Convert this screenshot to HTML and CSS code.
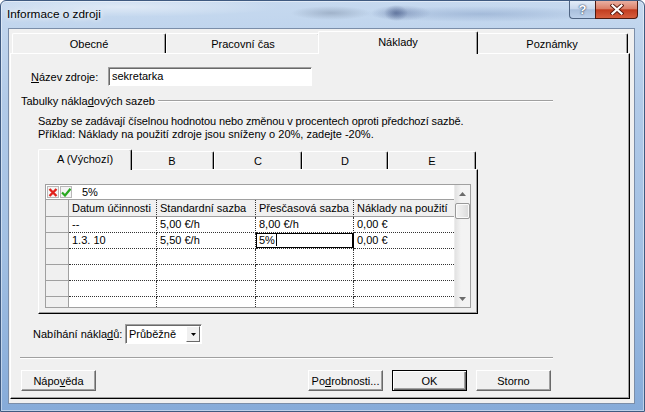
FILE: index.html
```html
<!DOCTYPE html>
<html lang="cs">
<head>
<meta charset="utf-8">
<title>Informace o zdroji</title>
<link rel="stylesheet" href="styles.css">
</head>
<body>
<div class="window">
  <div class="titlebar">
    <span class="title">Informace o zdroji</span>
    <div class="caption">
      <div class="cap-btn cap-help">?</div>
      <div class="cap-btn cap-close">
        <svg width="14" height="11" viewBox="0 0 14 11"><path d="M2.5 1.5 L11.5 9.5 M11.5 1.5 L2.5 9.5" stroke="#5a1a10" stroke-width="4" stroke-linecap="square"/><path d="M2.5 1.5 L11.5 9.5 M11.5 1.5 L2.5 9.5" stroke="#fff" stroke-width="2.2" stroke-linecap="square"/></svg>
      </div>
    </div>
  </div>
  <div class="client">
    <div class="tabstrip main">
      <div class="tab" style="width:154px">Obecné</div>
      <div class="tab" style="width:154px">Pracovní čas</div>
      <div class="tab active" style="width:160px">Náklady</div>
      <div class="tab" style="width:152px">Poznámky</div>
    </div>
    <div class="panel">
      <div class="name-row">
        <span class="lbl-name"><u>N</u>ázev zdroje:</span>
        <div class="textbox">sekretarka</div>
      </div>
      <div class="group-head">
        <span>Tabulky nákla<u>d</u>ových sazeb</span>
        <div class="etch"></div>
      </div>
      <p class="desc"><span class="tight">Sazby se zadávají číselnou hodnotou nebo změnou v procentech oproti předchozí sazbě.</span><br>Příklad: Náklady na použití zdroje jsou sníženy o 20%, zadejte -20%.</p>
      <div class="rates">
        <div class="tabstrip inner">
          <div class="tab active" style="width:94px">A (Výchozí)</div>
          <div class="tab" style="width:84px">B</div>
          <div class="tab" style="width:88px">C</div>
          <div class="tab" style="width:86px">D</div>
          <div class="tab" style="width:88px">E</div>
        </div>
        <div class="inner-panel">
          <div class="grid">
            <div class="grid-main">
              <div class="editbar">
                <span class="eb-icon"><svg width="10" height="9" viewBox="0 0 10 9"><path d="M1.5 1 L8.5 8 M8.5 1 L1.5 8" stroke="#e0201a" stroke-width="2.4"/></svg></span>
                <span class="eb-icon"><svg width="10" height="9" viewBox="0 0 10 9"><path d="M1 4.5 L4 7.5 L9.5 0.8" fill="none" stroke="#28a820" stroke-width="2.2"/></svg></span>
                <span class="eb-text">5%</span>
              </div>
              <div class="sheet">
                <div class="c rh hd"></div>
                <div class="c hd">Datum účinnosti</div>
                <div class="c hd">Standardní sazba</div>
                <div class="c hd">Přesčasová sazba</div>
                <div class="c hd last">Náklady na použití</div>

                <div class="c rh"></div>
                <div class="c">--</div>
                <div class="c">5,00 €/h</div>
                <div class="c">8,00 €/h</div>
                <div class="c last">0,00 €</div>

                <div class="c rh"></div>
                <div class="c">1.3. 10</div>
                <div class="c">5,50 €/h</div>
                <div class="c editing"><span class="caret">5%</span></div>
                <div class="c last">0,00 €</div>

                <div class="c rh"></div><div class="c"></div><div class="c"></div><div class="c"></div><div class="c last"></div>
                <div class="c rh"></div><div class="c"></div><div class="c"></div><div class="c"></div><div class="c last"></div>
                <div class="c rh"></div><div class="c"></div><div class="c"></div><div class="c"></div><div class="c last"></div>
                <div class="c rh part"></div><div class="c part"></div><div class="c part"></div><div class="c part"></div><div class="c last part"></div>
              </div>
            </div>
            <div class="vscroll">
              <div class="sb-arrow"><svg width="7" height="4" viewBox="0 0 7 4"><path d="M0 4 L3.5 0 L7 4 Z" fill="#6b6b6b"/></svg></div>
              <div class="sb-thumb"></div>
              <div class="sb-track"></div>
              <div class="sb-arrow"><svg width="7" height="4" viewBox="0 0 7 4"><path d="M0 0 L3.5 4 L7 0 Z" fill="#6b6b6b"/></svg></div>
            </div>
          </div>
        </div>
      </div>
      <div class="combo-row">
        <span class="lbl-combo">Nabíhání nákla<u>d</u>ů:</span>
        <div class="combo">
          <span class="combo-text">Průběžně</span>
          <span class="combo-btn"><svg width="5" height="3" viewBox="0 0 5 3"><path d="M0 0 L5 0 L2.5 3 Z" fill="#000"/></svg></span>
        </div>
      </div>
      <div class="sep"></div>
      <div class="buttons">
        <div class="btn help-btn">Nápo<u>v</u>ěda</div>
        <div class="btn">Po<u>d</u>robnosti...</div>
        <div class="btn default">OK</div>
        <div class="btn">Storno</div>
      </div>
    </div>
  </div>
</div>
</body>
</html>
```

FILE: styles.css
```css
* { box-sizing: border-box; }
html, body { margin: 0; padding: 0; }
body {
  width: 645px;
  height: 412px;
  overflow: hidden;
  font-family: "Liberation Sans", Arial, sans-serif;
  font-size: 11px;
  color: #000;
  background: #fff;
}
u { text-decoration: underline; text-underline-offset: 1px; }

.window {
  width: 645px;
  height: 412px;
  display: flex;
  flex-direction: column;
  border: 1px solid #3f5a80;
  border-radius: 6px 6px 0 0;
  background: linear-gradient(180deg, #c6d9ef 0%, #b1cae8 25%, #a2c0e3 60%, #86abd9 100%);
  box-shadow: inset 0 0 0 1px rgba(255,255,255,0.45);
}

.titlebar {
  height: 27px;
  flex: none;
  display: flex;
  justify-content: space-between;
  align-items: flex-start;
  padding-left: 6px;
  background:
    radial-gradient(ellipse 40px 7px at 330px 12px, rgba(80,95,120,0.30), transparent),
    radial-gradient(ellipse 30px 8px at 400px 12px, rgba(60,80,130,0.35), transparent),
    radial-gradient(ellipse 12px 8px at 395px 12px, rgba(30,50,100,0.45), transparent),
    radial-gradient(ellipse 120px 8px at 480px 13px, rgba(90,120,170,0.30), transparent),
    radial-gradient(ellipse 160px 10px at 120px 6px, rgba(255,255,255,0.45), transparent);
}
.title {
  padding-top: 6px;
  line-height: 14px;
  font-size: 11.8px;
  text-shadow: 0 0 5px #fff, 0 0 8px #fff;
}
.caption {
  display: flex;
  margin-right: 6px;
}
.cap-btn {
  height: 18px;
  display: flex;
  align-items: center;
  justify-content: center;
}
.cap-help {
  width: 26px;
  border: 1px solid #4f6482;
  border-top: none;
  border-right: none;
  border-radius: 0 0 0 4px;
  background: linear-gradient(180deg, #e4edf8 0%, #c9d8ec 45%, #a9bfdc 52%, #bcd0ea 100%);
  color: #fff;
  font-weight: bold;
  font-size: 13px;
  text-shadow: 0 0 2px #2c3f5e, 0 0 1px #2c3f5e;
}
.cap-close {
  width: 43px;
  border: 1px solid #4d1a10;
  border-top: none;
  border-radius: 0 0 4px 0;
  background: linear-gradient(180deg, #eab0a2 0%, #dc8068 45%, #c23d20 52%, #d65f3f 100%);
}

.client {
  flex: none;
  height: 376px;
  margin: 0 9px 7px 7px;
  border: 1px solid #7b8ea9;
  background: #f0f0f0;
  display: flex;
  flex-direction: column;
  padding: 2px 4px 4px 1px;
}

.tabstrip {
  display: flex;
  align-items: flex-end;
  flex: none;
}
.tabstrip.main { height: 22px; padding-left: 2px; }
.tabstrip.inner { height: 20px; padding-left: 2px; }

.tab {
  flex: none;
  height: 20px;
  display: flex;
  align-items: center;
  justify-content: center;
  background: #f0f0f0;
  border-top: 1px solid #fff;
  border-left: 1px solid #fff;
  border-right: 1px solid #000;
  box-shadow: inset -1px 0 0 #a0a0a0;
  border-radius: 2px 2px 0 0;
}
.tabstrip.inner .tab { height: 18px; }
.tab.active {
  height: 23px;
  margin: 0 -2px -1px -2px;
  padding-bottom: 2px;
  position: relative;
  z-index: 1;
}
.tabstrip.inner .tab.active { height: 21px; padding-bottom: 2px; }

.panel {
  flex: 1;
  border-top: 1px solid #fff;
  border-left: 1px solid #fff;
  border-right: 1px solid #000;
  border-bottom: 1px solid #000;
  box-shadow: inset -1px -1px 0 #a0a0a0;
  display: flex;
  flex-direction: column;
}

.name-row {
  margin-top: 13px;
  padding-left: 20px;
  height: 19px;
  display: flex;
  align-items: center;
}
.lbl-name { width: 77px; flex: none; }
.textbox {
  width: 204px;
  height: 19px;
  background: #fff;
  border-top: 1px solid #a0a0a0;
  border-left: 1px solid #a0a0a0;
  border-right: 1px solid #fff;
  border-bottom: 1px solid #fff;
  box-shadow: inset 1px 1px 0 #696969;
  padding-left: 3px;
  line-height: 17px;
}

.group-head {
  margin-top: 8px;
  height: 13px;
  display: flex;
  align-items: center;
  padding: 0 76px 0 10px;
}
.etch {
  flex: 1;
  margin-left: 3px;
  height: 2px;
  border-top: 1px solid #a0a0a0;
  border-bottom: 1px solid #fff;
}

.desc {
  margin: 8px 0 0 27px;
  line-height: 13px;
}
.tight { letter-spacing: -0.12px; }

.rates {
  margin: 8px 0 0 27px;
  width: 440px;
}
.inner-panel {
  height: 145px;
  border-top: 1px solid #fff;
  border-left: 1px solid #fff;
  border-right: 1px solid #000;
  border-bottom: 1px solid #000;
  box-shadow: inset -1px -1px 0 #a0a0a0;
  padding: 14px 0 0 6px;
}

.grid {
  width: 426px;
  height: 124px;
  border: 1px solid #a0a0a0;
  background: #fff;
  display: flex;
}
.grid-main { width: 408px; display: flex; flex-direction: column; }
.editbar {
  height: 15px;
  display: flex;
  align-items: center;
  padding-left: 1px;
  border-bottom: 1px solid #a0a0a0;
}
.eb-icon {
  width: 12px;
  height: 12px;
  display: flex;
  align-items: center;
  justify-content: center;
  border: 1px solid #b8b8b8;
  background: #f4f4f4;
}
.eb-icon + .eb-icon { margin-left: 1px; }
.eb-text { margin-left: 10px; }

.sheet {
  display: grid;
  grid-template-columns: 23px 88px 99px 98px 100px;
  grid-template-rows: 17px 16px 16px 16px 16px 16px 10px;
}
.c {
  border-right: 1px dotted #333;
  border-bottom: 1px dotted #333;
  padding-left: 3px;
  line-height: 15px;
  white-space: nowrap;
  overflow: hidden;
}
.c.last { border-right: none; }
.c.hd {
  background: #f0f0f0;
  border-bottom: 1px solid #a0a0a0;
  line-height: 16px;
}
.c.rh {
  background: #f0f0f0;
  border-right: 1px solid #a0a0a0;
  border-bottom: 1px solid #a0a0a0;
}
.c.part { border-bottom: none; }
.c.editing { box-shadow: inset 0 0 0 1px #000; border-right: 1px solid #000; }
.caret { border-right: 1px solid #000; padding-right: 1px; }

.vscroll {
  width: 16px;
  display: flex;
  flex-direction: column;
  background: linear-gradient(90deg, #e2e2e2 0%, #f3f3f3 40%, #f3f3f3 100%);
  border-left: 1px solid #ececec;
}
.sb-arrow {
  height: 17px;
  flex: none;
  display: flex;
  align-items: center;
  justify-content: center;
}
.sb-thumb {
  height: 16px;
  margin: 1px 0 0 0;
  flex: none;
  border: 1px solid #999;
  border-radius: 2px;
  background: linear-gradient(90deg, #f3f3f3 0%, #e8e8e8 50%, #d9d9d9 100%);
  box-shadow: inset 0 0 0 1px #fafafa;
}
.sb-track { flex: 1; }

.combo-row {
  margin-top: 10px;
  padding-left: 22px;
  height: 20px;
  display: flex;
  align-items: center;
}
.lbl-combo { width: 92px; flex: none; }
.combo {
  width: 77px;
  height: 20px;
  display: flex;
  align-items: center;
  justify-content: space-between;
  background: #fff;
  border-top: 1px solid #a0a0a0;
  border-left: 1px solid #a0a0a0;
  border-right: 1px solid #fff;
  border-bottom: 1px solid #fff;
  box-shadow: inset 1px 1px 0 #696969;
  padding: 1px 1px 1px 3px;
}
.combo-btn {
  width: 14px;
  height: 16px;
  display: flex;
  align-items: center;
  justify-content: center;
  background: #f0f0f0;
  border-top: 1px solid #fff;
  border-left: 1px solid #fff;
  border-right: 1px solid #696969;
  border-bottom: 1px solid #696969;
}

.sep {
  margin: 13px 76px 0 9px;
  height: 2px;
  border-top: 1px solid #a0a0a0;
  border-bottom: 1px solid #fff;
}

.buttons {
  margin-top: 11px;
  padding: 0 78px 0 10px;
  display: flex;
  gap: 9px;
}
.btn {
  width: 75px;
  height: 21px;
  display: flex;
  align-items: center;
  justify-content: center;
  background: #f0f0f0;
  border-top: 1px solid #fff;
  border-left: 1px solid #fff;
  border-right: 1px solid #696969;
  border-bottom: 1px solid #696969;
  box-shadow: inset -1px -1px 0 #a0a0a0;
}
.btn.help-btn { margin-right: auto; }
.btn.default {
  border: 1px solid #000;
  box-shadow: inset 1px 1px 0 #fff, inset -1px -1px 0 #696969, inset -2px -2px 0 #a0a0a0;
}
```
